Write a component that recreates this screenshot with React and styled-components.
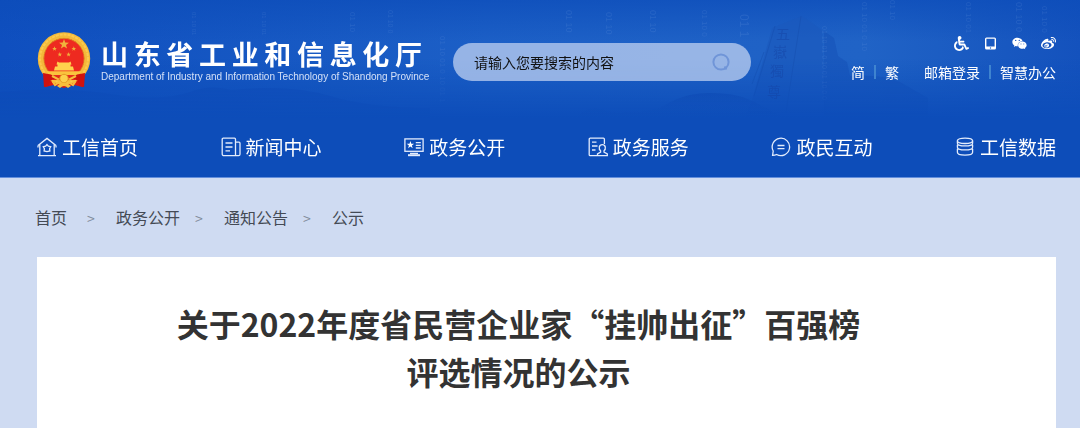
import styled, { createGlobalStyle } from 'styled-components';
import { FaWheelchair, FaWeixin, FaWeibo } from 'react-icons/fa';

const GlobalStyle = createGlobalStyle`
  * {
    box-sizing: border-box;
  }
  body {
    margin: 0;
    background: #cfdbf2;
    font-family: 'Noto Sans CJK SC', sans-serif;
  }
  a {
    color: inherit;
    text-decoration: none;
  }
  ul,
  ol,
  h1,
  p {
    margin: 0;
    padding: 0;
    list-style: none;
  }
`;

const Page = styled.div`
  min-height: 100vh;
  display: flex;
  flex-direction: column;
`;

const Header = styled.header`
  position: relative;
  isolation: isolate;
  background: #0d4db9;
  border-bottom: 1px solid #648fdc;
  color: #fff;
`;

const Backdrop = styled.svg`
  position: absolute;
  z-index: -1;
  top: 0;
  left: 0;
  width: 100%;
  height: 118px;
`;

const TopBar = styled.div`
  display: flex;
  align-items: flex-start;
  height: 118px;
  padding: 32px 24px 0 37px;
`;

const Brand = styled.a`
  display: flex;
  align-items: flex-start;
  gap: 10px;
`;

const Emblem = styled.svg`
  width: 54px;
  height: 57px;
`;

const BrandText = styled.div`
  display: flex;
  flex-direction: column;
  width: 321px;
  padding-top: 5px;
`;

const BrandName = styled.span`
  font-size: 27px;
  font-weight: 700;
  line-height: 34px;
  text-align-last: justify;
`;

const BrandSub = styled.span`
  font-family: 'Liberation Sans', Arial, sans-serif;
  font-size: 10px;
  line-height: 12px;
  color: #d3e0f7;
  white-space: nowrap;
`;

const SearchForm = styled.form`
  display: flex;
  align-items: center;
  width: 298px;
  height: 38px;
  margin: 11px 0 0 31px;
  padding: 0 20px 0 21px;
  border-radius: 19px;
  background: rgba(202, 216, 244, 0.7);
  input {
    flex: 1;
    min-width: 0;
    padding: 0;
    border: 0;
    outline: 0;
    background: none;
    font: 14px/20px 'Noto Sans CJK SC', sans-serif;
    color: #111;
  }
  input::placeholder {
    color: #111;
    opacity: 1;
  }
  button {
    display: flex;
    padding: 0;
    border: 0;
    background: none;
    color: #7095d8;
    cursor: pointer;
  }
`;

const Tools = styled.div`
  display: flex;
  flex-direction: column;
  align-items: flex-end;
  gap: 11px;
  margin-left: auto;
  padding-top: 4px;
`;

const IconRow = styled.div`
  display: flex;
  gap: 14px;
  a {
    display: flex;
    justify-content: center;
    width: 15px;
  }
`;

const LinkRow = styled.div`
  display: flex;
  align-items: center;
  font-size: 14px;
  line-height: 20px;
`;

const Divider = styled.i`
  width: 2px;
  height: 14px;
  margin: 0 9px;
  background: #3f84cf;
`;

const LangGroup = styled.div`
  display: flex;
  align-items: center;
  margin-right: 25px;
`;

const Nav = styled.nav`
  padding: 14px 24px 15px 37px;
  ul {
    display: flex;
    justify-content: space-between;
  }
  a {
    display: flex;
    align-items: center;
    gap: 5px;
    font-size: 19px;
    line-height: 30px;
  }
  svg {
    width: 20px;
    height: 20px;
    fill: none;
    stroke: #e3ecfc;
    stroke-width: 1.3;
  }
`;

const Breadcrumb = styled.nav`
  padding: 27px 35px;
  ol {
    display: flex;
  }
  li {
    font-size: 16px;
    line-height: 24px;
    color: #444a55;
  }
  li:first-child {
    padding-right: 5px;
  }
  li + li::before {
    content: '>';
    display: inline-block;
    width: 9px;
    margin: 0 20px 0 15px;
    font-size: 14px;
    color: #828b9b;
  }
`;

const Article = styled.main`
  flex: 1;
  margin: 0 24px 0 37px;
  padding: 42px 56px 30px 0;
  background: #fff;
`;

const Title = styled.h1`
  font-size: 32px;
  font-weight: 700;
  line-height: 48px;
  text-align: center;
  color: #333;
`;

const star = (cx, cy, r) =>
  Array.from({ length: 10 }, (_, i) => {
    const a = (Math.PI * i) / 5 - Math.PI / 2;
    const d = i % 2 ? r * 0.4 : r;
    return `${(cx + d * Math.cos(a)).toFixed(2)},${(cy + d * Math.sin(a)).toFixed(2)}`;
  }).join(' ');

const NationalEmblem = () => (
  <Emblem viewBox="0 0 54 57" aria-hidden="true">
    <path d="M7 39 L8 55 L17 53 L27 56 L37 53 L46 55 L48 39 Z" fill="#d8160f" />
    <circle cx="27" cy="26.5" r="23.2" fill="#e02a1c" stroke="#f4b93a" strokeWidth="6" />
    <circle cx="27" cy="26.5" r="24" fill="none" stroke="#fcca4e" strokeWidth="2" strokeDasharray="3 1" />
    <circle cx="27" cy="26.5" r="20.2" fill="#ee2a20" stroke="#dc9a25" strokeWidth="0.8" />
    <g fill="#f0b43c">
      <polygon points={star(27, 12.3, 5.2)} />
      <polygon points={star(17.5, 16.7, 2.5)} />
      <polygon points={star(36.8, 16.7, 2.5)} />
      <polygon points={star(22.8, 22.5, 2.4)} />
      <polygon points={star(31.6, 22.5, 2.4)} />
      <path d="M20.5 29.5 L22 30.5 H32 L33.5 29.5 L34.5 32.5 H19.5 Z M20.5 32.5 H33.5 V34.5 H20.5 Z M18 34.5 H36 L37 38.5 H17 Z" fill="#ffd24d" />
      <path d="M9.5 39.2 H44.5 L42 43 H12 Z" fill="#fac43e" />
    </g>
    <path d="M12 43.5 H42 L38 48 H16 Z" fill="#e02a1c" />
    <path d="M6 41 L14 42.5 L19 46 L13 49 L12 54 L7 55 Z M48 41 L40 42.5 L35 46 L41 49 L42 54 L47 55 Z" fill="#cf120f" />
    <path d="M15 44 L21 47 L16 50 L18 53 L24 49 M39 44 L33 47 L38 50 L36 53 L30 49" fill="none" stroke="#f7bd3c" strokeWidth="2" />
    <circle cx="27" cy="46.5" r="4.2" fill="#fdd04b" stroke="#e59a22" />
    <path d="M20 54 Q27 47 34 54 L31 56 Q27 52 23 56 Z" fill="#f8bf3b" />
  </Emblem>
);

const digitColumns = [
  [192, 12, 36, 6],
  [262, 12, 36, 6],
  [350, 12, 36, 8],
  [388, 10, 36, 7],
  [440, 36, 110, 8],
  [566, 10, 40, 9],
  [606, 12, 40, 9],
  [650, 10, 40, 9],
  [702, 10, 40, 8],
  [740, 14, 42, 12],
  [822, 26, 108, 7],
  [862, 2, 58, 8],
  [890, 0, 20, 8],
  [966, 2, 34, 8],
  [1016, 2, 34, 9],
  [1042, 6, 34, 8],
];

const HeaderBackdrop = () => (
  <Backdrop viewBox="0 0 1080 118" preserveAspectRatio="xMidYMid slice" aria-hidden="true">
    <defs>
      <linearGradient id="sky" x1="0" x2="1" y1="0" y2="0">
        <stop offset="0" stopColor="#0f4fbf" />
        <stop offset="0.45" stopColor="#1c5fc6" />
        <stop offset="0.8" stopColor="#2063c6" />
        <stop offset="1" stopColor="#1452bd" />
      </linearGradient>
      <linearGradient id="top" x1="0" x2="0" y1="0" y2="1">
        <stop offset="0" stopColor="#0c4cb9" stopOpacity="0.7" />
        <stop offset="0.35" stopColor="#0c4cb9" stopOpacity="0" />
      </linearGradient>
      <linearGradient id="ground" x1="0" x2="0" y1="0" y2="1">
        <stop offset="0.5" stopColor="#0d4db9" stopOpacity="0" />
        <stop offset="1" stopColor="#0d4db9" />
      </linearGradient>
      <linearGradient id="hill" gradientUnits="userSpaceOnUse" x1="0" x2="0" y1="90" y2="118">
        <stop offset="0" stopColor="#0c46b0" stopOpacity="0.55" />
        <stop offset="1" stopColor="#0d4db9" stopOpacity="0" />
      </linearGradient>
    </defs>
    <rect width="1080" height="118" fill="url(#sky)" />
    <rect width="1080" height="118" fill="url(#top)" />
    <path
      d="M0 92 Q60 86 110 94 T190 92 Q210 84 232 90 Q290 84 330 96 T430 108 V118 H0 Z"
      fill="#0d46b4"
      opacity="0.45"
    />
    <path d="M752 100 L772 28 L802 16 L822 30 L826 118 H745 Z" fill="#1a58bd" opacity="0.6" />
    <path d="M801 16 L786 112 M775 26 L754 96 M764 52 L752 84" stroke="#134aa9" fill="none" opacity="0.4" />
    <path
      d="M824 118 V31 L834 38 L838 56 L847 62 L850 76 Q880 74 900 82 L928 98 V118 Z"
      fill="#1450b6"
      opacity="0.5"
    />
    <g fill="#6f9be0" opacity="0.2" fontFamily="Liberation Sans, sans-serif">
      {digitColumns.map(([x, from, to, size]) => (
        <text key={x} fontSize={size} transform={`translate(${x} ${from}) rotate(90)`}>
          {'01 10 01 0 10 01 10 0 01'.slice(0, Math.floor((to - from) / (size * 0.5)))}
        </text>
      ))}
    </g>
    <rect width="1080" height="118" fill="url(#ground)" />
    <path d="M574 118 Q590 104 604 110 T660 108 Q684 92 712 93 Q740 93 758 104 L786 118 Z" fill="url(#hill)" />
    <g fill="#1440a0" opacity="0.4" fontFamily="Noto Sans CJK TC, sans-serif" fontSize="14">
      <text x="776" y="39">五</text>
      <text x="773" y="57">嶽</text>
      <text x="770" y="76">獨</text>
      <text x="767" y="97">尊</text>
    </g>
  </Backdrop>
);

const HomeIcon = () => (
  <svg viewBox="0 0 20 20" aria-hidden="true">
    <path d="M1 8.5 10 1.4 19 8.5M2.8 7.3v11.4M17.2 7.3v11.4M1 18.7h18M1 8.5v2M19 8.5v2" />
    <path d="M10 7.6l1.4 1.6 2.3.5-1.1 2 .3 2.3-2.9.6-2.9-.6.3-2.3-1.1-2 2.3-.5z" />
  </svg>
);

const NewsIcon = () => (
  <svg viewBox="0 0 20 20" aria-hidden="true">
    <path d="M14.5 18.7H3a1.8 1.8 0 0 1-1.8-1.8V2.2a1 1 0 0 1 1-1h11.3a1 1 0 0 1 1 1v16.5zM14.5 5.2H18a1 1 0 0 1 1 1v11a1.5 1.5 0 0 1-1.5 1.5h-3" />
    <path d="M4.5 6h7M4.5 10h7M4.5 13.8h4.5" />
  </svg>
);

const OpenIcon = () => (
  <svg viewBox="0 0 20 20" aria-hidden="true">
    <rect x="0.9" y="1.9" width="18.2" height="12.4" />
    <polygon points={star(6.4, 8, 3.9)} fill="#fff" stroke="none" />
    <path d="M11.8 5.6h5M11.8 8.3h5M11.8 11h5M6 16.4h8" />
    <path d="M4 18.2h12" strokeWidth="2" />
  </svg>
);

const ServiceIcon = () => (
  <svg viewBox="0 0 20 20" aria-hidden="true">
    <path d="M9 18.7H2.2a1 1 0 0 1-1-1V2.2a1 1 0 0 1 1-1h13.2a1 1 0 0 1 1 1V7" />
    <path d="M4 5.2h4.5M4 9h5.5M4 13h3.5" />
    <path d="M12.6 13.8Q10.9 12.5 11.3 10q.6-2.3 3-2.3t3 2.3q.4 2.5-1.3 3.8v1.4l3.3 1.6v1.9H9.5v-1.9l3.1-1.6z" />
  </svg>
);

const InteractIcon = () => (
  <svg viewBox="0 0 20 20" aria-hidden="true">
    <path d="M1.6 18.4 2.2 14A8.7 8.7 0 1 1 5.6 17.5Q4 18.4 1.6 18.4z" />
    <path d="M6.5 8.5h7M6.5 11.7h7" />
  </svg>
);

const DataIcon = () => (
  <svg viewBox="0 0 20 20" aria-hidden="true">
    <ellipse cx="10" cy="3.8" rx="7.6" ry="2.7" />
    <path d="M2.4 3.8v2.4c0 3.6 15.2 3.6 15.2 0V3.8M2.4 7.8v2.4c0 3.6 15.2 3.6 15.2 0V7.8M2.4 11.8v3.4c0 3.8 15.2 3.8 15.2 0v-3.4" />
  </svg>
);

const navItems = [
  { label: '工信首页', Icon: HomeIcon },
  { label: '新闻中心', Icon: NewsIcon },
  { label: '政务公开', Icon: OpenIcon },
  { label: '政务服务', Icon: ServiceIcon },
  { label: '政民互动', Icon: InteractIcon },
  { label: '工信数据', Icon: DataIcon },
];

const crumbs = ['首页', '政务公开', '通知公告', '公示'];

const App = () => {
  return (
    <Page>
      <GlobalStyle />
      <Header>
        <HeaderBackdrop />
        <TopBar>
          <Brand href="#">
            <NationalEmblem />
            <BrandText>
              <BrandName>山东省工业和信息化厅</BrandName>
              <BrandSub>Department of Industry and Information Technology of Shandong Province</BrandSub>
            </BrandText>
          </Brand>
          <SearchForm onSubmit={(e) => e.preventDefault()}>
            <input
              type="text"
              aria-label="搜索"
              placeholder="请输入您要搜索的内容"
            />
            <button type="submit" aria-label="搜索">
              <svg width="20" height="20" viewBox="0 0 20 20" fill="none" stroke="currentColor" strokeWidth="2">
                <circle cx="10" cy="10" r="7.6" />
                <path d="M13.5 14.5l2 3" />
              </svg>
            </button>
          </SearchForm>
          <Tools>
            <IconRow>
              <a href="#" aria-label="无障碍">
                <FaWheelchair size={15} />
              </a>
              <a href="#" aria-label="移动版">
                <svg width="15" height="15" viewBox="0 0 15 15" aria-hidden="true">
                  <path
                    d="M3.5 1.5h8a1.5 1.5 0 0 1 1.5 1.5v9a1.5 1.5 0 0 1-1.5 1.5h-8A1.5 1.5 0 0 1 2 12V3a1.5 1.5 0 0 1 1.5-1.5zM3.4 2.8v7.7h8.2V2.8z"
                    fill="#fff"
                    fillRule="evenodd"
                  />
                  <circle cx="7.5" cy="12" r="0.7" fill="#1e60c5" />
                </svg>
              </a>
              <a href="#" aria-label="微信">
                <FaWeixin size={15} />
              </a>
              <a href="#" aria-label="微博">
                <FaWeibo size={15} />
              </a>
            </IconRow>
            <LinkRow>
              <LangGroup>
                <a href="#">简</a>
                <Divider />
                <a href="#">繁</a>
              </LangGroup>
              <a href="#">邮箱登录</a>
              <Divider />
              <a href="#">智慧办公</a>
            </LinkRow>
          </Tools>
        </TopBar>
        <Nav>
          <ul>
            {navItems.map(({ label, Icon }) => (
              <li key={label}>
                <a href="#">
                  <Icon />
                  {label}
                </a>
              </li>
            ))}
          </ul>
        </Nav>
      </Header>
      <Breadcrumb aria-label="当前位置">
        <ol>
          {crumbs.map((name) => (
            <li key={name}>
              <a href="#">{name}</a>
            </li>
          ))}
        </ol>
      </Breadcrumb>
      <Article>
        <Title>
          关于2022年度省民营企业家“挂帅出征”百强榜
          <br />
          评选情况的公示
        </Title>
      </Article>
    </Page>
  );
};

export default App;
